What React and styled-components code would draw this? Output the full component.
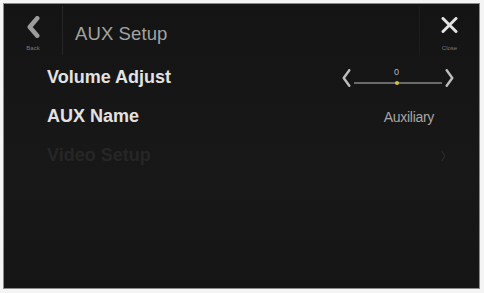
import React from "react";
import styled, { createGlobalStyle } from "styled-components";

const Global = createGlobalStyle`
  html, body { margin: 0; padding: 0; background: #f4f4f4; }
  body { font-family: "Liberation Sans", Arial, sans-serif; }
  #root { width: 484px; height: 293px; padding: 3px 4px 4px 3px; box-sizing: border-box; }
`;

const Screen = styled.div`
  width: 100%;
  height: 100%;
  box-sizing: border-box;
  border: 1px solid #8a8a8a;
  background: linear-gradient(180deg, #141414 0%, #181818 60%, #151515 100%);
  display: flex;
  flex-direction: column;
  overflow: hidden;
`;

const Header = styled.div`
  height: 54px;
  display: flex;
  align-items: stretch;
  flex-shrink: 0;
`;

const NavButton = styled.div`
  width: ${(p) => p.$w}px;
  display: flex;
  flex-direction: column;
  align-items: center;
  padding-top: ${(p) => p.$top}px;
  box-sizing: border-box;
`;

const NavLabel = styled.span`
  font-size: 6px;
  color: #7a7a7a;
  margin-top: ${(p) => p.$gap}px;
  line-height: 6px;
`;

const Divider = styled.div`
  width: 1px;
  margin: 2px 0 3px;
  background: ${(p) => p.$c};
`;

const Title = styled.div`
  flex: 1;
  padding-left: 12px;
  padding-top: 19px;
  font-size: 18.5px;
  color: #a3a3a3;
  letter-spacing: 0.1px;
`;

const List = styled.div`
  display: flex;
  flex-direction: column;
`;

const Row = styled.div`
  height: 39px;
  display: flex;
  align-items: center;
  justify-content: space-between;
  padding: 0 ${(p) => p.$pr}px 0 43px;
`;

const Label = styled.span`
  font-size: 18px;
  font-weight: 700;
  color: ${(p) => (p.$dim ? "#262626" : "#e2e2e2")};
`;

const Value = styled.span`
  font-size: 14px;
  color: #a5a5a5;
  letter-spacing: -0.3px;
`;

const Slider = styled.div`
  display: flex;
  align-items: center;
  gap: 3px;
`;

const Track = styled.div`
  width: 88px;
  height: 22px;
  position: relative;
`;

const TrackLine = styled.div`
  position: absolute;
  left: 0;
  right: 0;
  top: 15px;
  height: 2px;
  background: #6a6a6a;
`;

const Knob = styled.div`
  position: absolute;
  left: 41px;
  top: 14px;
  width: 4px;
  height: 4px;
  border-radius: 50%;
  background: #d8c040;
`;

const Zero = styled.span`
  position: absolute;
  left: 40px;
  top: 0px;
  font-size: 9px;
  color: #b8b8b8;
`;

const Chev = ({ dir = "left", w = 9, h = 18, sw = 2, color = "#bdbdbd" }) => (
  <svg width={w} height={h} viewBox={`0 0 ${w} ${h}`}>
    <polyline
      points={
        dir === "left"
          ? `${w - sw / 2 - 0.5},${sw / 2} ${sw / 2 + 0.5},${h / 2} ${w - sw / 2 - 0.5},${h - sw / 2}`
          : `${sw / 2 + 0.5},${sw / 2} ${w - sw / 2 - 0.5},${h / 2} ${sw / 2 + 0.5},${h - sw / 2}`
      }
      fill="none"
      stroke={color}
      strokeWidth={sw}
      strokeLinecap="round"
      strokeLinejoin="round"
    />
  </svg>
);

const CloseIcon = () => (
  <svg width="17" height="16" viewBox="0 0 17 16">
    <path d="M2 1.5 L15 14.5 M15 1.5 L2 14.5" stroke="#e2e2e2" strokeWidth="3" strokeLinecap="round" />
  </svg>
);

export default function App() {
  return (
    <>
      <Global />
      <Screen>
        <Header>
          <NavButton $w={58} $top={12}>
            <Chev dir="left" w={13} h={22} sw={4.5} color="#9c9c9c" />
            <NavLabel $gap={7}>Back</NavLabel>
          </NavButton>
          <Divider $c="#262626" />
          <Title>AUX Setup</Title>
          <Divider $c="#1d1d1d" />
          <NavButton $w={59} $top={13}>
            <CloseIcon />
            <NavLabel $gap={12}>Close</NavLabel>
          </NavButton>
        </Header>
        <List>
          <Row $pr={25}>
            <Label>Volume Adjust</Label>
            <Slider>
              <Chev dir="left" w={9} h={18} sw={2.4} />
              <Track>
                <Zero>0</Zero>
                <TrackLine />
                <Knob />
              </Track>
              <Chev dir="right" w={9} h={18} sw={2.4} />
            </Slider>
          </Row>
          <Row $pr={45}>
            <Label>AUX Name</Label>
            <Value>Auxiliary</Value>
          </Row>
          <Row $pr={33}>
            <Label $dim>Video Setup</Label>
            <Chev dir="right" w={5} h={10} sw={1.2} color="#2a2a2a" />
          </Row>
        </List>
      </Screen>
    </>
  );
}
